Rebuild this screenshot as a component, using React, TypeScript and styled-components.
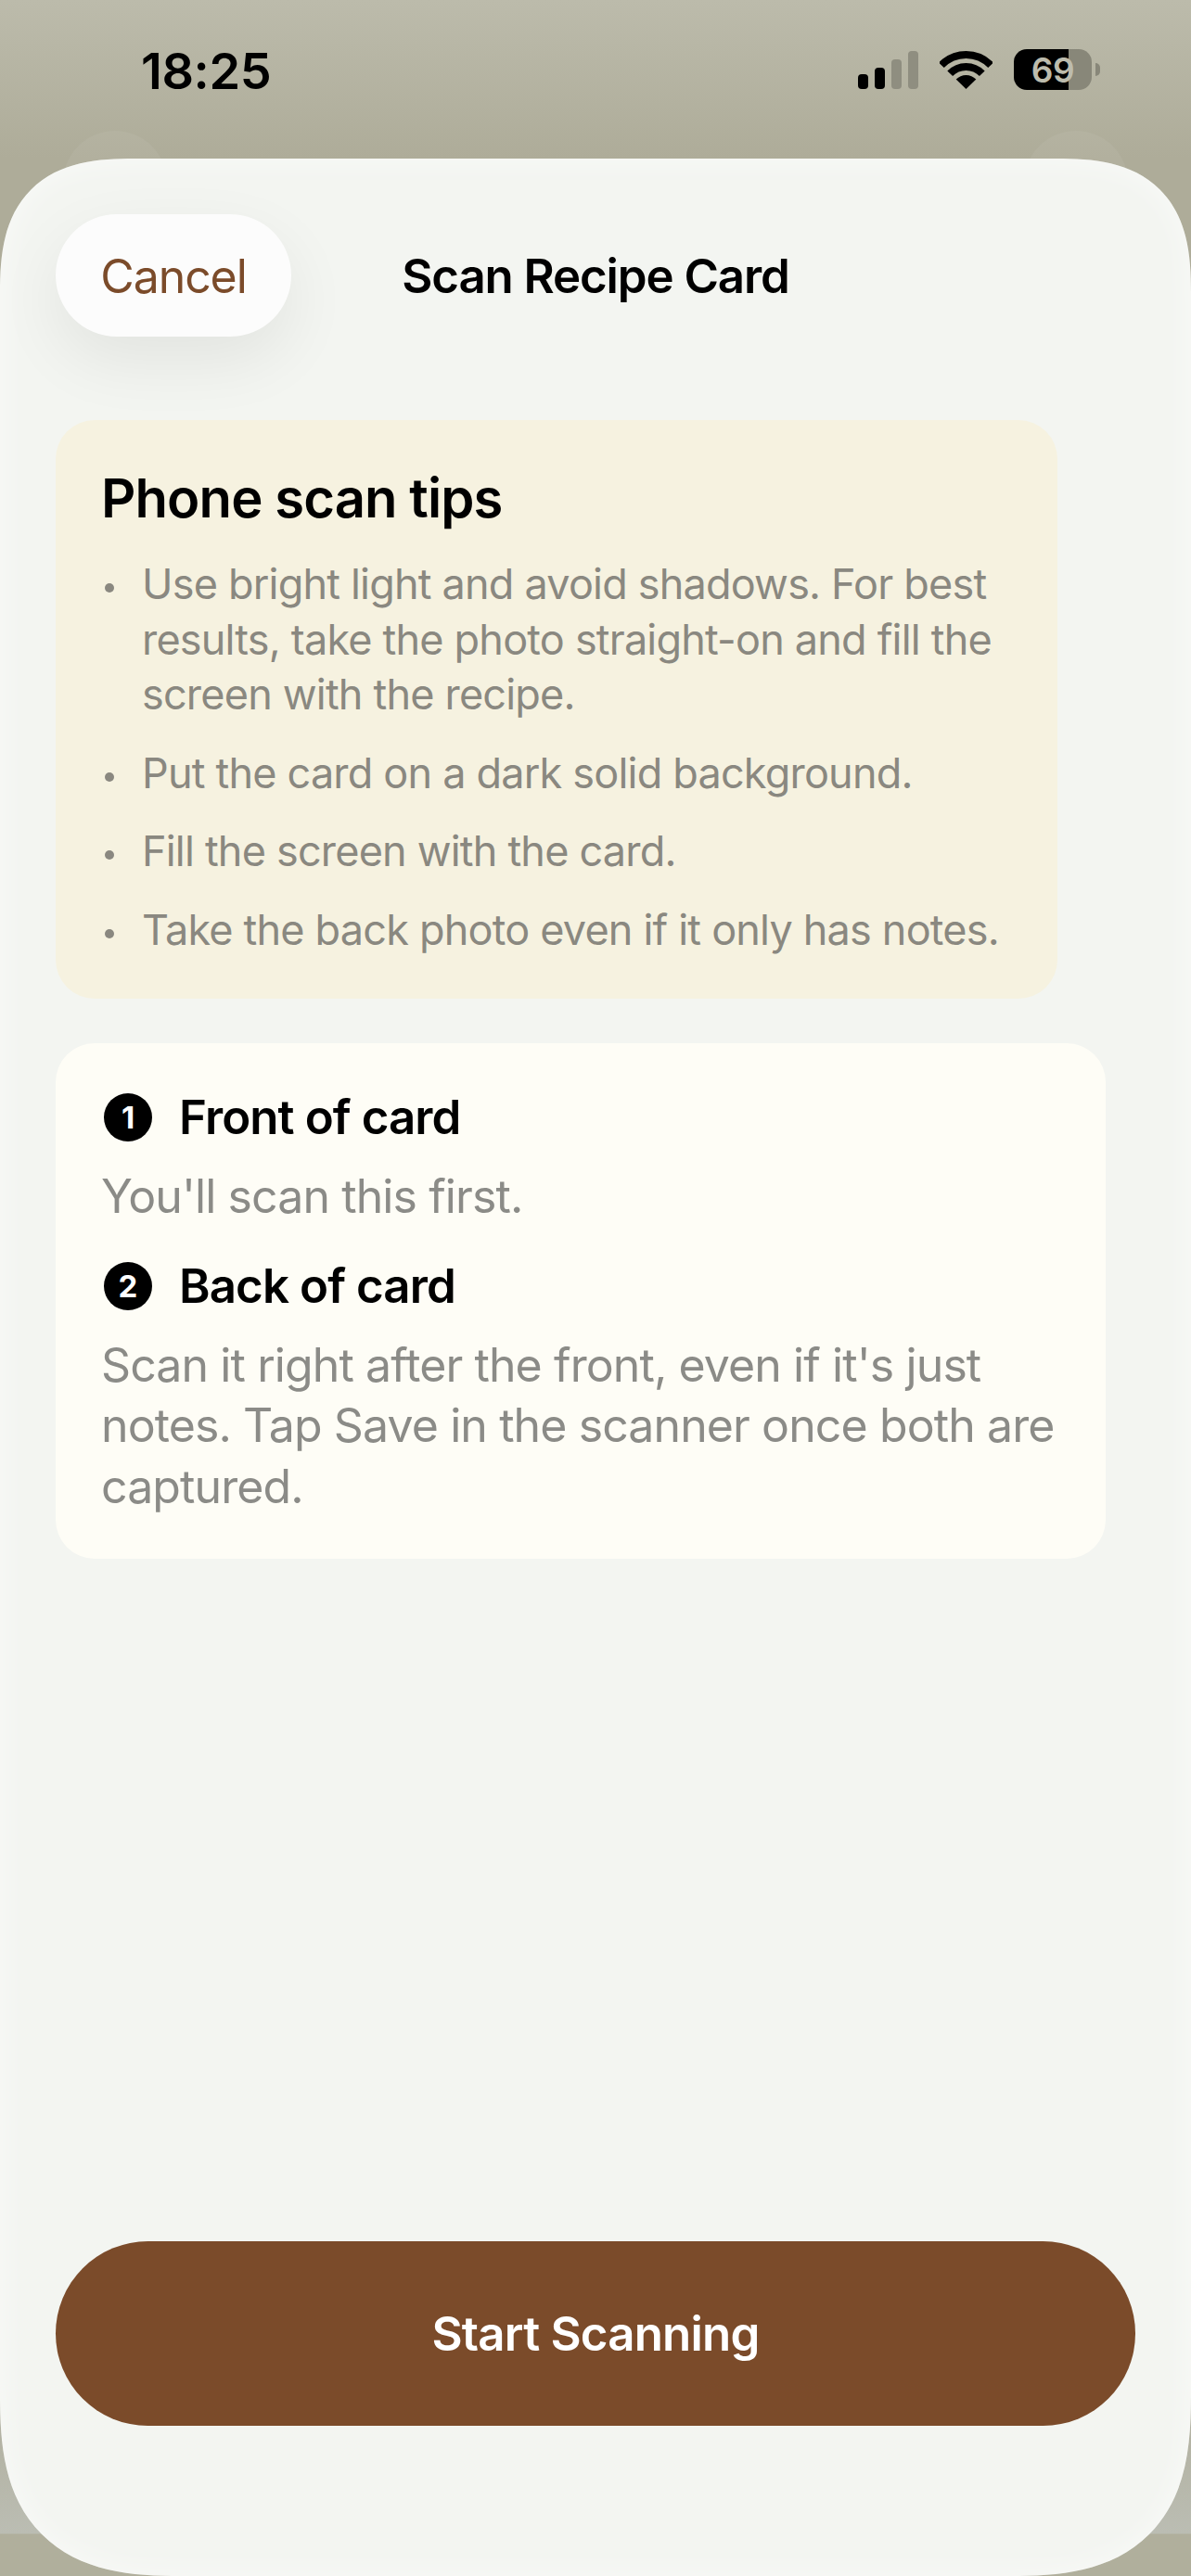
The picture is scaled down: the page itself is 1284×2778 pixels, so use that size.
import React from "react";
import styled, { createGlobalStyle } from "styled-components";

const Global = createGlobalStyle`
  html, body { margin: 0; padding: 0; }
  body { font-family: Inter, "Liberation Sans", sans-serif; -webkit-font-smoothing: antialiased; }
`;

const Screen = styled.div`
  position: relative;
  width: 1284px;
  height: 2778px;
  display: flex;
  flex-direction: column;
  overflow: hidden;
  background: linear-gradient(#bcbbab 0, #aeac99 171px, #aeac99 2560px, #bbbdb3 2732px, #b0af9c 2733px);
`;

const Bump = styled.div<{ $side: "left" | "right" }>`
  position: absolute;
  top: 141px;
  ${(p) => p.$side}: 68px;
  width: 112px;
  height: 112px;
  border-radius: 50%;
  background: rgba(255, 255, 255, 0.05);
`;

const StatusBar = styled.div`
  position: relative;
  height: 171px;
  box-sizing: border-box;
  flex: none;
  display: flex;
  justify-content: space-between;
  align-items: flex-start;
  padding: 50px 98px 0 152px;
`;

const Time = styled.div`
  font-size: 54px;
  line-height: 54px;
  font-weight: 600;
  color: #000;
  letter-spacing: -0.4px;
`;

const StatusIcons = styled.div`
  display: flex;
  align-items: flex-start;
  margin-top: 3px;
`;

const SignalIcon = styled.svg`
  width: 65px;
  height: 41px;
  margin-top: 2px;
`;

const WifiIcon = styled.svg`
  width: 57px;
  height: 41px;
  margin: 2px 0 0 23px;
`;

const Battery = styled.div`
  position: relative;
  width: 84px;
  height: 44px;
  margin-left: 23px;
  border-radius: 14px;
  background: linear-gradient(90deg, #000 0 59px, #888779 59px);
  display: flex;
  align-items: center;
  justify-content: center;
  font-size: 37px;
  font-weight: 600;
  color: #bdbcad;
  letter-spacing: -0.5px;
  margin-right: 9px;

  &::after {
    content: "";
    position: absolute;
    right: -9px;
    top: 15px;
    width: 5px;
    height: 14px;
    border-radius: 0 7px 7px 0;
    background: #888779;
  }
`;

const Sheet = styled.main`
  position: relative;
  flex: 1;
  box-sizing: border-box;
  display: flex;
  flex-direction: column;
  align-items: flex-start;
  padding: 60px 60px 162px;
  background: #f3f5f1;
  border-radius: 120px 120px 165px 165px;
  box-shadow: inset 0 0 34px rgba(255, 255, 255, 0.55);

  @supports (corner-shape: superellipse(1.4)) {
    border-radius: 145px 145px 195px 195px;
    corner-shape: superellipse(1.4);
  }
`;

const Header = styled.header`
  width: 100%;
  display: grid;
  grid-template-columns: 1fr auto 1fr;
  align-items: center;
`;

const CancelButton = styled.button`
  justify-self: start;
  width: 254px;
  height: 132px;
  border: none;
  border-radius: 66px;
  padding: 2px 0 0;
  font: 400 50px Inter, sans-serif;
  color: #7b4b2a;
  background: #fcfcfc;
  box-shadow: 0 26px 70px rgba(0, 0, 0, 0.07);
  letter-spacing: -1.1px;
`;

const Title = styled.h1`
  margin: 2px 0 0;
  font-size: 51px;
  line-height: 66px;
  font-weight: 600;
  color: #000;
  letter-spacing: -1.1px;
`;

const TipsCard = styled.section`
  box-sizing: border-box;
  width: 1080px;
  margin-top: 90px;
  padding: 48px 40px 45px 49px;
  border-radius: 42px;
  background: #f6f2e0;
`;

const TipsTitle = styled.h2`
  margin: 0 0 27px;
  font-size: 58px;
  line-height: 72px;
  font-weight: 600;
  color: #000;
  letter-spacing: -0.9px;
`;

const TipList = styled.ul`
  list-style: none;
  margin: 0;
  padding: 0;
  display: flex;
  flex-direction: column;
  gap: 25px;
`;

const Tip = styled.li`
  display: flex;
  align-items: flex-start;
  font-size: 45px;
  line-height: 59.5px;
  color: #8a8880;
  letter-spacing: -0.8px;
`;

const Dot = styled.span`
  flex: none;
  width: 10px;
  height: 10px;
  margin: 29px 30px 0 4px;
  border-radius: 50%;
  background: #8a8880;
`;

const StepsCard = styled.section`
  box-sizing: border-box;
  width: 1132px;
  margin-top: 48px;
  padding: 47px 40px 45px 49px;
  border-radius: 42px;
  background: #fefdf6;
`;

const StepRow = styled.div<{ $later?: boolean }>`
  display: flex;
  align-items: center;
  gap: 29px;
  margin-top: ${(p) => (p.$later ? "30px" : "0")};
`;

const StepNumber = styled.span`
  flex: none;
  width: 52px;
  height: 52px;
  margin-left: 3px;
  border-radius: 50%;
  background: #000;
  color: #fff;
  font-size: 33px;
  font-weight: 700;
  display: flex;
  align-items: center;
  justify-content: center;
`;

const StepTitle = styled.h3`
  margin: 0;
  font-size: 51px;
  line-height: 66px;
  font-weight: 600;
  color: #000;
  letter-spacing: -0.9px;
`;

const StepText = styled.p`
  margin: 20px 0 0;
  font-size: 50px;
  line-height: 65.5px;
  color: #8b8b87;
  letter-spacing: -0.9px;
`;

const StartButton = styled.button`
  width: 1164px;
  height: 199px;
  margin-top: auto;
  border: none;
  border-radius: 100px;
  padding: 0;
  background: #7b4b2a;
  color: #fff;
  font: 600 51px Inter, sans-serif;
  letter-spacing: -0.8px;
`;

export default function App() {
  return (
    <Screen>
      <Global />
      <Bump $side="left" />
      <Bump $side="right" />
      <StatusBar>
        <Time>18:25</Time>
        <StatusIcons>
          <SignalIcon viewBox="0 0 65 41">
            <rect x="0" y="25" width="11" height="16" rx="4" fill="#000" />
            <rect x="18" y="18" width="11" height="23" rx="4" fill="#000" />
            <rect x="36" y="9" width="11" height="32" rx="4" fill="#8f8e80" />
            <rect x="54" y="0" width="11" height="41" rx="4" fill="#8f8e80" />
          </SignalIcon>
          <WifiIcon viewBox="0 0 57 41">
            <path d="M1.9 15.3A37 37 0 0 1 55.1 15.3" fill="none" stroke="#000" strokeWidth="8" />
            <path d="M11.2 24.3A24 24 0 0 1 45.8 24.3" fill="none" stroke="#000" strokeWidth="8" />
            <path d="M28.5 41L17.7 30.6A15 15 0 0 1 39.3 30.6Z" fill="#000" />
          </WifiIcon>
          <Battery>69</Battery>
        </StatusIcons>
      </StatusBar>
      <Sheet>
        <Header>
          <CancelButton>Cancel</CancelButton>
          <Title>Scan Recipe Card</Title>
          <span />
        </Header>
        <TipsCard>
          <TipsTitle>Phone scan tips</TipsTitle>
          <TipList>
            <Tip>
              <Dot />
              <span>Use bright light and avoid shadows. For best results, take the photo straight-on and fill the screen with the recipe.</span>
            </Tip>
            <Tip>
              <Dot />
              <span>Put the card on a dark solid background.</span>
            </Tip>
            <Tip>
              <Dot />
              <span>Fill the screen with the card.</span>
            </Tip>
            <Tip>
              <Dot />
              <span>Take the back photo even if it only has notes.</span>
            </Tip>
          </TipList>
        </TipsCard>
        <StepsCard>
          <StepRow>
            <StepNumber>1</StepNumber>
            <StepTitle>Front of card</StepTitle>
          </StepRow>
          <StepText>You'll scan this first.</StepText>
          <StepRow $later>
            <StepNumber>2</StepNumber>
            <StepTitle>Back of card</StepTitle>
          </StepRow>
          <StepText>Scan it right after the front, even if it's just notes. Tap Save in the scanner once both are captured.</StepText>
        </StepsCard>
        <StartButton>Start Scanning</StartButton>
      </Sheet>
    </Screen>
  );
}
